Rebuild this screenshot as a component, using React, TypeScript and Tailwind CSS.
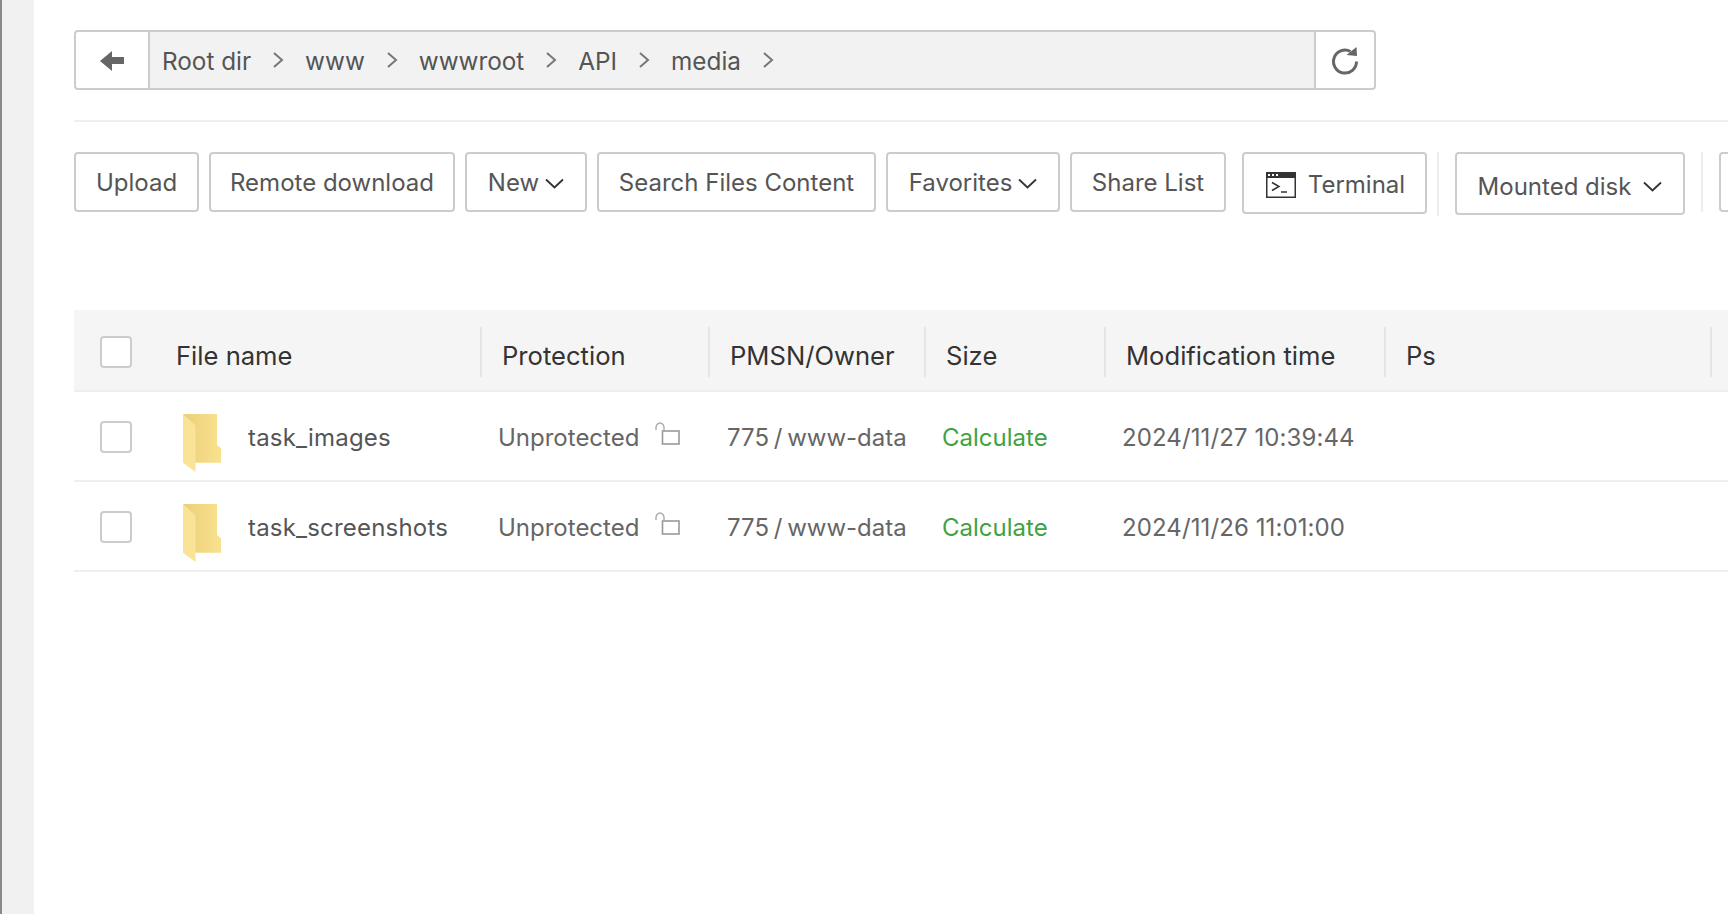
import React from "react";

const crumbs = ["Root dir", "www", "wwwroot", "API", "media"];

const files = [
  { name: "task_images", time: "2024/11/27 10:39:44" },
  { name: "task_screenshots", time: "2024/11/26 11:01:00" },
];

const Chevron = () => (
  <svg width="19" height="11" viewBox="0 0 19 11" fill="none" className="shrink-0">
    <path d="M1 1.5 9.5 9.5 18 1.5" stroke="#333" strokeWidth="1.8" />
  </svg>
);

const CrumbArrow = () => (
  <svg width="12" height="18" viewBox="0 0 12 18" fill="none" className="shrink-0">
    <path d="M2 2 10 9 2 16" stroke="#777" strokeWidth="2" />
  </svg>
);

const Checkbox = () => (
  <div className="w-8 h-8 shrink-0 bg-white border-2 border-[#ccc] rounded-[4px]" />
);

const FolderIcon = () => (
  <svg width="38" height="58" viewBox="0 0 38 56" preserveAspectRatio="none" className="shrink-0">
    <defs>
      <linearGradient id="folderBack" x1="0" y1="0" x2="1" y2="0">
        <stop offset="0" stopColor="#ecce7a" />
        <stop offset="1" stopColor="#f9e28f" />
      </linearGradient>
    </defs>
    <path d="M0 0H34V30L38 33V47H10V12Z" fill="url(#folderBack)" />
    <path d="M0 0 12.5 11V56L0 47Z" fill="#f9e396" />
  </svg>
);

const LockIcon = () => (
  <svg width="25" height="24" viewBox="0 0 25 24" fill="none" className="shrink-0 -mt-1">
    <rect x="7.5" y="9" width="16.5" height="13" stroke="#999" strokeWidth="1.6" />
    <path d="M1 8V5.5C1 3 3 1 5 1S9 3 9 5.5V9" stroke="#aaa" strokeWidth="1.4" />
  </svg>
);

const TerminalIcon = () => (
  <svg width="30" height="26" viewBox="0 0 30 26" fill="none" className="shrink-0">
    <rect x="0.75" y="0.75" width="28.5" height="24.5" stroke="#333" strokeWidth="1.5" />
    <rect x="0" y="0" width="30" height="6" fill="#333" />
    <rect x="2" y="2" width="2" height="2" fill="#fff" />
    <rect x="6" y="2" width="2" height="2" fill="#fff" />
    <rect x="10" y="2" width="2" height="2" fill="#fff" />
    <path d="M6 10.5 13 14.5 6 18.5" stroke="#333" strokeWidth="1.5" />
    <path d="M15 20H21" stroke="#333" strokeWidth="1.5" />
  </svg>
);

const btn =
  "shrink-0 h-[60px] pt-0.5 flex items-center justify-center gap-1.5 bg-white border-2 border-[#ccc] rounded-[4px] text-[#555]";

export default function App() {
  return (
    <div
      className="flex h-[914px] w-[1728px] overflow-hidden bg-white text-[24px] leading-none"
      style={{ fontFamily: "Inter, 'Noto Sans', sans-serif" }}
    >
      <div className="w-[34px] shrink-0 bg-[#f1f1f1] border-l-2 border-[#8a8a8a]" />

      <div className="flex-1 min-w-0 pl-10 pt-[30px]">
        {/* path bar */}
        <div className="w-[1302px] h-[60px] flex border-2 border-[#ccc] rounded-[4px] text-[#555]">
          <div className="w-[74px] shrink-0 flex items-center justify-center bg-white rounded-l-[4px] border-r-2 border-[#ccc]">
            <svg width="24" height="20" viewBox="0 0 24 20" fill="#666" className="mt-0.5">
              <path d="M0 10 12 0V6H24V13H12V20Z" />
            </svg>
          </div>
          <div className="flex-1 flex items-center bg-[#f2f2f2] pl-3 text-[24.3px]">
            {crumbs.map((c) => (
              <React.Fragment key={c}>
                <span className="mt-0.5">{c}</span>
                <span className="mx-[21px]">
                  <CrumbArrow />
                </span>
              </React.Fragment>
            ))}
          </div>
          <div className="w-[60px] shrink-0 flex items-center justify-center bg-white rounded-r-[4px] border-l-2 border-[#ccc]">
            <svg width="28" height="28" viewBox="0 0 28 28" fill="none" className="mt-0.5">
              <path d="M19.5 4.5A11.5 11.5 0 1 0 25.5 14.5" stroke="#666" strokeWidth="3" />
              <path d="M15.5 8 26 9 25.5 0Z" fill="#666" />
            </svg>
          </div>
        </div>

        <div className="h-0.5 bg-[#eee] mt-[30px]" />

        {/* toolbar */}
        <div className="flex items-start gap-2.5 mt-[30px]">
          <button className={`${btn} w-[125px]`}>Upload</button>
          <button className={`${btn} w-[246px]`}>Remote download</button>
          <button className={`${btn} w-[122px]`}>
            New
            <Chevron />
          </button>
          <button className={`${btn} w-[279px]`}>Search Files Content</button>
          <button className={`${btn} w-[174px]`}>
            Favorites
            <Chevron />
          </button>
          <button className={`${btn} w-[156px]`}>Share List</button>
          <button className={`${btn} w-[185px] h-[62px] ml-1.5 gap-3 pt-1 pl-0.5`}>
            <TerminalIcon />
            Terminal
          </button>
          <div className="w-0.5 h-16 shrink-0 bg-[#eee]" />
          <button className={`${btn} w-[230px] h-[63px] ml-1.5 gap-3 pt-1.5`}>
            Mounted disk
            <Chevron />
          </button>
          <div className="w-0.5 h-[60px] shrink-0 bg-[#eee] ml-1.5" />
          <div className="w-10 h-[60px] shrink-0 ml-1.5 border-2 border-[#ccc] rounded-[4px]" />
        </div>

        {/* file table */}
        <div className="mt-[94px]">
          <div className="h-[82px] flex items-center bg-[#f5f5f5] border-b-2 border-[#eee] text-[#333] text-[25.6px]">
            <div className="w-[406px] shrink-0 flex items-center">
              <div className="ml-[26px] mt-[3px]">
                <Checkbox />
              </div>
              <span className="ml-[44px] mt-[11px]">File name</span>
            </div>
            <HeadCell className="w-[228px]" label="Protection" />
            <HeadCell className="w-[216px]" label="PMSN/Owner" />
            <HeadCell className="w-[180px]" label="Size" />
            <HeadCell className="w-[280px]" label="Modification time" />
            <HeadCell className="w-[326px]" label="Ps" />
            <div className="w-0.5 h-[50px] mt-1 bg-[#e5e5e5] shrink-0" />
          </div>

          {files.map((f) => (
            <div key={f.name} className="h-[90px] flex items-center border-b-2 border-[#eee] text-[#666]">
              <div className="w-[407px] shrink-0 flex items-center">
                <div className="ml-[26px] mt-0.5">
                  <Checkbox />
                </div>
                <div className="ml-[51px] mt-[13px]">
                  <FolderIcon />
                </div>
                <span className="ml-[27px] mt-1 text-[#555] tracking-[0.2px]">{f.name}</span>
              </div>
              <div className="w-[229px] shrink-0 flex items-center pl-[17px] gap-4">
                <span className="mt-1">Unprotected</span>
                <LockIcon />
              </div>
              <div className="w-[215px] shrink-0 pl-[17px] mt-1 [word-spacing:-2px]">775 / www-data</div>
              <div className="w-[180px] shrink-0 pl-[17px] mt-1 text-[#3fa33f]">Calculate</div>
              <div className="shrink-0 pl-[17px] mt-1 tracking-[0.1px]">{f.time}</div>
            </div>
          ))}
        </div>
      </div>
    </div>
  );
}

function HeadCell({ className, label }: { className: string; label: string }) {
  return (
    <div className={`${className} shrink-0 h-[50px] mt-1 flex items-center pl-5 border-l-2 border-[#e5e5e5]`}>
      <span className="mt-[7px]">{label}</span>
    </div>
  );
}
